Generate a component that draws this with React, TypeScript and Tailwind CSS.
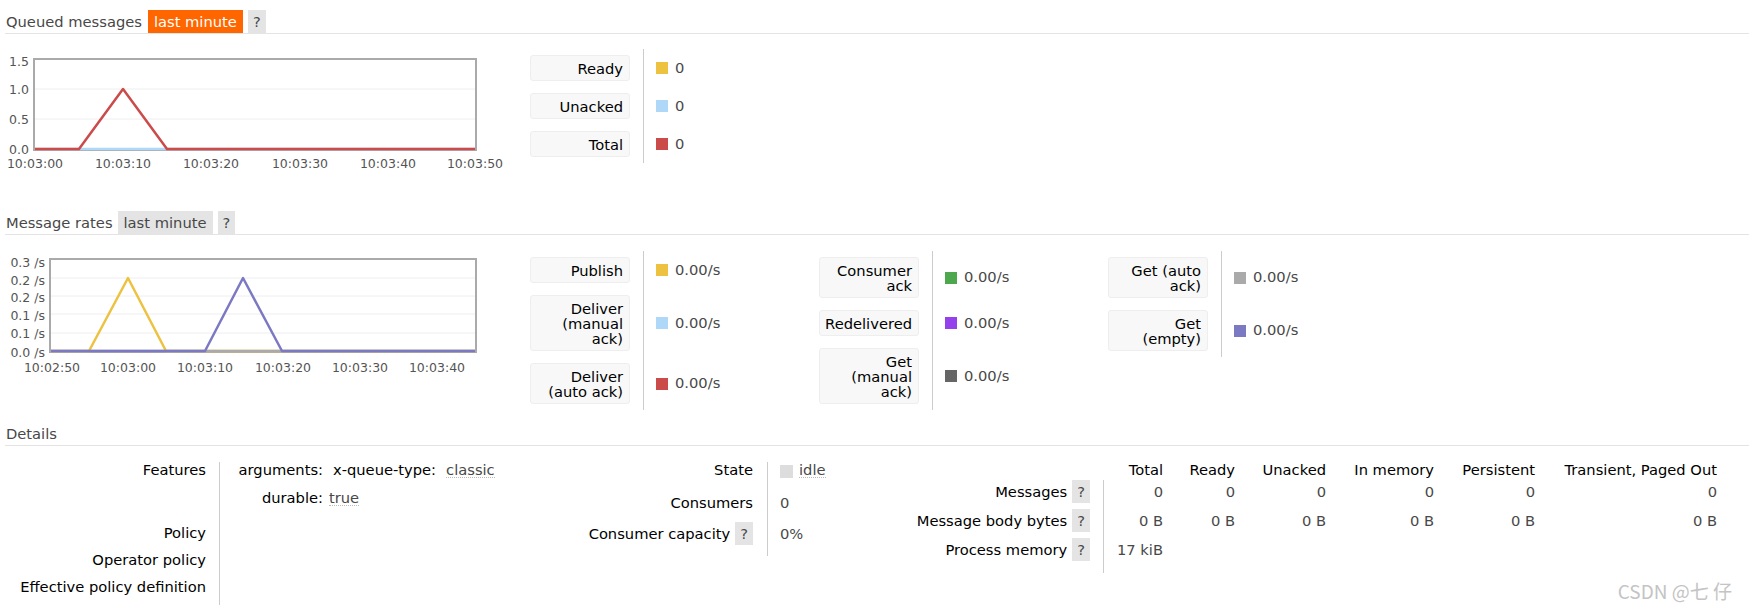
import React from "react";

type LegendRow = { label: string; swatch: string; value: string };

const queued: LegendRow[] = [
  { label: "Ready", swatch: "bg-[#edc240]", value: "0" },
  { label: "Unacked", swatch: "bg-[#afd8f8]", value: "0" },
  { label: "Total", swatch: "bg-[#cb4b4b]", value: "0" },
];

const rates1: LegendRow[] = [
  { label: "Publish", swatch: "bg-[#edc240]", value: "0.00/s" },
  { label: "Deliver (manual ack)", swatch: "bg-[#afd8f8]", value: "0.00/s" },
  { label: "Deliver (auto ack)", swatch: "bg-[#cb4b4b]", value: "0.00/s" },
];

const rates2: LegendRow[] = [
  { label: "Consumer ack", swatch: "bg-[#4da74d]", value: "0.00/s" },
  { label: "Redelivered", swatch: "bg-[#9440ed]", value: "0.00/s" },
  { label: "Get (manual ack)", swatch: "bg-[#666666]", value: "0.00/s" },
];

const rates3: LegendRow[] = [
  { label: "Get (auto ack)", swatch: "bg-[#aaaaaa]", value: "0.00/s" },
  { label: "Get (empty)", swatch: "bg-[#7c79c3]", value: "0.00/s" },
];

function SectionHeader({ title, badge, active }: { title: string; badge?: string; active?: boolean }) {
  return (
    <div className="ml-[5px] flex h-[24px] items-start border-b border-[#e4e4e4] leading-[23px] text-[#484848]">
      <span className="pl-[1px]">{title}</span>
      {badge && (
        <span className={active ? "ml-[6px] bg-[#ff6600] px-[6px] text-white" : "ml-[5px] bg-[#e4e4e4] px-[6px]"}>
          {badge}
        </span>
      )}
      {badge && <span className="ml-[5px] bg-[#e4e4e4] px-[5px]">?</span>}
    </div>
  );
}

function Legend({ rows }: { rows: LegendRow[] }) {
  return (
    <div className="grid w-[289px] grid-cols-[113px_176px]">
      {rows.map((r) => (
        <React.Fragment key={r.label}>
          <div className="py-[6px] pr-[13px]">
            <div className="rounded-[3px] border border-[#eeeeee] bg-[#f8f8f8] py-[4.5px] pl-[4px] pr-[6px] text-right leading-[15px] text-black">
              {r.label}
            </div>
          </div>
          <div className="flex items-center gap-[7px] border-l border-[#cccccc] pl-[12px] text-[#484848]">
            <span className={`h-[12px] w-[12px] ${r.swatch}`} />
            <span>{r.value}</span>
          </div>
        </React.Fragment>
      ))}
    </div>
  );
}

function QueuedChart() {
  const xs = [
    ["10:03:00", 35],
    ["10:03:10", 123],
    ["10:03:20", 211],
    ["10:03:30", 300],
    ["10:03:40", 388],
    ["10:03:50", 475],
  ] as const;
  const ys = [
    ["1.5", 12],
    ["1.0", 40],
    ["0.5", 70],
    ["0.0", 100],
  ] as const;
  return (
    <svg width="530" height="130" className="shrink-0 font-['DejaVu_Sans',sans-serif]">
      <line x1="35" y1="40" x2="475" y2="40" stroke="#eeeeee" />
      <line x1="35" y1="70" x2="475" y2="70" stroke="#eeeeee" />
      <rect x="34" y="10" width="442" height="91" fill="none" stroke="#aaaaaa" strokeWidth="2" />
      <polyline points="35,100 475,100" fill="none" stroke="#afd8f8" strokeWidth="2.5" />
      <polyline points="35,100 79,100 123,40 167,100 475,100" fill="none" stroke="#cb4b4b" strokeWidth="2.5" strokeLinejoin="round" />
      {ys.map(([t, y]) => (
        <text key={t} x="29" y={y + 4.5} textAnchor="end" fontSize="12.5" fill="#545454">
          {t}
        </text>
      ))}
      {xs.map(([t, x]) => (
        <text key={t} x={x} y="118.5" textAnchor="middle" fontSize="12.5" fill="#545454">
          {t}
        </text>
      ))}
    </svg>
  );
}

function RatesChart() {
  const xs = [
    ["10:02:50", 52],
    ["10:03:00", 128],
    ["10:03:10", 205],
    ["10:03:20", 283],
    ["10:03:30", 360],
    ["10:03:40", 437],
  ] as const;
  const ys = [
    ["0.3 /s", 11, 0],
    ["0.2 /s", 29, 27],
    ["0.2 /s", 46, 45],
    ["0.1 /s", 64, 63],
    ["0.1 /s", 82, 82],
    ["0.0 /s", 101, 0],
  ] as const;
  return (
    <svg width="530" height="130" className="shrink-0 font-['DejaVu_Sans',sans-serif]">
      {ys
        .filter(([, , g]) => g > 0)
        .map(([, , g]) => (
          <line key={`g${g}`} x1="51" y1={g} x2="475" y2={g} stroke="#eeeeee" />
        ))}
      <rect x="50" y="8" width="426" height="93" fill="none" stroke="#aaaaaa" strokeWidth="2" />
      <polyline points="51,100 89,100 128,27 166,100 475,100" fill="none" stroke="#edc240" strokeWidth="2.5" strokeLinejoin="round" />
      <polyline points="51,100 475,100" fill="none" stroke="#aaaaaa" strokeWidth="2.5" />
      <polyline points="51,100 205,100 243,27 282,100 475,100" fill="none" stroke="#7c79c3" strokeWidth="2.5" strokeLinejoin="round" />
      {ys.map(([t, y]) => (
        <text key={`${t}${y}`} x="45" y={y + 4.5} textAnchor="end" fontSize="12.5" fill="#545454">
          {t}
        </text>
      ))}
      {xs.map(([t, x]) => (
        <text key={t} x={x} y="120.5" textAnchor="middle" fontSize="12.5" fill="#545454">
          {t}
        </text>
      ))}
    </svg>
  );
}

function Help() {
  return <span className="ml-[5px] h-[23px] bg-[#e4e4e4] px-[5px] leading-[23px] text-[#484848]">?</span>;
}

const stats = [
  { label: "Messages", values: ["0", "0", "0", "0", "0", "0"], h: "h-[29px]" },
  { label: "Message body bytes", values: ["0 B", "0 B", "0 B", "0 B", "0 B", "0 B"], h: "h-[29px]" },
  { label: "Process memory", values: ["17 kiB", "", "", "", "", ""], h: "h-[35px]" },
];

export default function App() {
  return (
    <div className="relative h-[610px] w-[1749px] overflow-hidden bg-white pt-[10px] font-['DejaVu_Sans',sans-serif] text-[14.7px]">
      <SectionHeader title="Queued messages" badge="last minute" active />
      <div className="mt-[15px] flex items-start">
        <QueuedChart />
        <Legend rows={queued} />
      </div>

      <div className="mt-[32px]">
        <SectionHeader title="Message rates" badge="last minute" />
      </div>
      <div className="mt-[16px] flex items-start">
        <RatesChart />
        <Legend rows={rates1} />
        <Legend rows={rates2} />
        <Legend rows={rates3} />
      </div>

      <div className="mt-[12px]">
        <SectionHeader title="Details" />
      </div>
      <div className="mt-[16px] flex items-start leading-[15px]">
        {/* features / policies */}
        <div className="grid w-[560px] grid-cols-[219px_341px] text-black">
          <div className="h-[63px] pr-[13px] text-right">Features</div>
          <div className="border-l border-[#cccccc] pl-[17px]">
            <div className="grid grid-cols-[86px_auto]">
              <div className="h-[28px] text-right">arguments:</div>
              <div className="flex items-start pl-[10px]">
                <span>x-queue-type:</span>
                <span className="ml-[10px] border-b border-dotted border-[#bbbbbb] text-[#484848]">classic</span>
              </div>
              <div className="text-right">durable:</div>
              <div className="flex items-start pl-[6px]">
                <span className="border-b border-dotted border-[#bbbbbb] text-[#484848]">true</span>
              </div>
            </div>
          </div>
          <div className="h-[27px] pr-[13px] text-right">Policy</div>
          <div className="border-l border-[#cccccc]" />
          <div className="h-[27px] pr-[13px] text-right">Operator policy</div>
          <div className="border-l border-[#cccccc]" />
          <div className="h-[26px] pr-[13px] text-right">Effective policy definition</div>
          <div className="border-l border-[#cccccc]" />
        </div>

        {/* state / consumers */}
        <div className="grid w-[267px] grid-cols-[207px_60px] text-black">
          <div className="h-[33px] pr-[14px] text-right">State</div>
          <div className="flex items-start gap-[6px] border-l border-[#cccccc] pl-[12px]">
            <span className="mt-[3px] h-[13px] w-[13px] bg-[#dddddd]" />
            <span className="border-b border-dotted border-[#bbbbbb] text-[#484848]">idle</span>
          </div>
          <div className="h-[27px] pr-[14px] text-right">Consumers</div>
          <div className="border-l border-[#cccccc] pl-[12px] text-[#484848]">0</div>
          <div className="flex h-[34px] items-start justify-end pr-[14px]">
            <span className="leading-[23px]">Consumer capacity</span>
            <Help />
          </div>
          <div className="border-l border-[#cccccc] pl-[12px] pt-[4px] text-[#484848]">0%</div>
        </div>

        {/* message stats */}
        <div className="grid grid-cols-[276px_60px_72px_91px_108px_101px_182px] text-black">
          <div className="h-[18px]" />
          {["Total", "Ready", "Unacked", "In memory", "Persistent", "Transient, Paged Out"].map((h) => (
            <div key={h} className="text-right">
              {h}
            </div>
          ))}
          {stats.map((s) => (
            <React.Fragment key={s.label}>
              <div className={`flex items-start justify-end pr-[13px] ${s.h}`}>
                <span className="leading-[23px]">{s.label}</span>
                <Help />
              </div>
              {s.values.map((v, i) => (
                <div
                  key={i}
                  className={
                    i === 0
                      ? "border-l border-[#cccccc] text-right leading-[23px] text-[#484848]"
                      : "text-right leading-[23px] text-[#484848]"
                  }
                >
                  {v}
                </div>
              ))}
            </React.Fragment>
          ))}
        </div>
      </div>

      <div className="absolute right-[17px] top-[579px] font-['Noto_Sans_CJK_SC',sans-serif] text-[19px] leading-[24px] text-[#c4c4c4]">
        CSDN @七 仔
      </div>
    </div>
  );
}
